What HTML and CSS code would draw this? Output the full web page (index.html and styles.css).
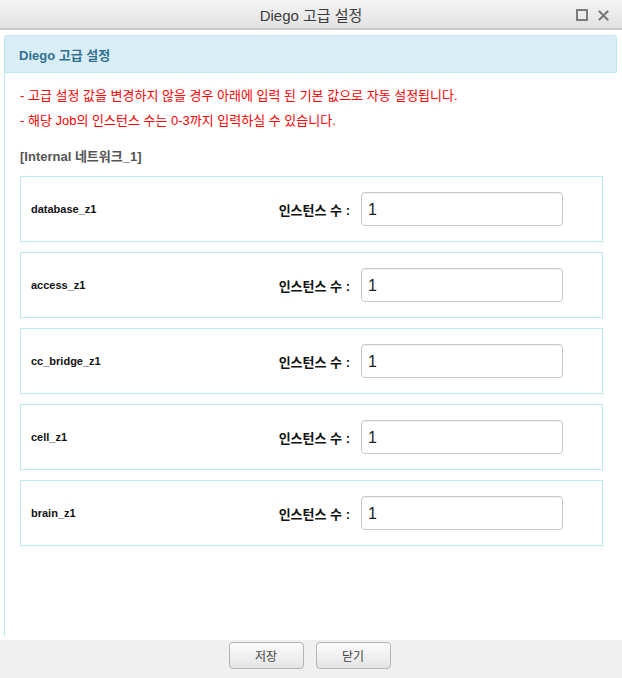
FILE: index.html
```html
<!DOCTYPE html>
<html lang="ko">
<head>
<meta charset="utf-8">
<title>Diego 고급 설정</title>
<link rel="stylesheet" href="styles.css">
</head>
<body>
<div class="dialog">
  <div class="titlebar">
    <span class="title">Diego 고급 설정</span>
    <div class="tools">
      <svg class="ico" width="12" height="12" viewBox="0 0 12 12"><rect x="1" y="1" width="10" height="10" fill="none" stroke="#7b7b7b" stroke-width="2"/></svg>
      <svg class="ico" width="11" height="11" viewBox="0 0 11 11"><path d="M1.5 1.5 L9.5 9.5 M9.5 1.5 L1.5 9.5" stroke="#7b7b7b" stroke-width="2.2" stroke-linecap="round"/></svg>
    </div>
  </div>
  <div class="content">
    <div class="panel">
      <div class="panel-heading">Diego 고급 설정</div>
      <div class="panel-body">
        <p class="warn">- 고급 설정 값을 변경하지 않을 경우 아래에 입력 된 기본 값으로 자동 설정됩니다.</p>
        <p class="warn">- 해당 Job의 인스턴스 수는 0-3까지 입력하실 수 있습니다.</p>
        <h4 class="net">[Internal 네트워크_1]</h4>
        <div class="job">
          <span class="job-name">database_z1</span>
          <label class="job-label">인스턴스 수 :</label>
          <input class="job-input" type="text" value="1">
        </div>
        <div class="job">
          <span class="job-name">access_z1</span>
          <label class="job-label">인스턴스 수 :</label>
          <input class="job-input" type="text" value="1">
        </div>
        <div class="job">
          <span class="job-name">cc_bridge_z1</span>
          <label class="job-label">인스턴스 수 :</label>
          <input class="job-input" type="text" value="1">
        </div>
        <div class="job">
          <span class="job-name">cell_z1</span>
          <label class="job-label">인스턴스 수 :</label>
          <input class="job-input" type="text" value="1">
        </div>
        <div class="job">
          <span class="job-name">brain_z1</span>
          <label class="job-label">인스턴스 수 :</label>
          <input class="job-input" type="text" value="1">
        </div>
      </div>
    </div>
  </div>
  <div class="footer">
    <button class="btn" type="button">저장</button>
    <button class="btn" type="button">닫기</button>
  </div>
</div>
</body>
</html>
```

FILE: styles.css
```css
* { box-sizing: border-box; }
html, body {
  margin: 0;
  padding: 0;
  background: #fff;
  font-family: "Liberation Sans", Arial, "Noto Sans CJK KR", sans-serif;
}
.dialog {
  width: 622px;
  height: 678px;
  display: flex;
  flex-direction: column;
  overflow: hidden;
}
.titlebar {
  height: 30px;
  flex: none;
  background: linear-gradient(#f4f4f4, #e2e2e2);
  border-bottom: 2px solid #c8c8c8;
  position: relative;
  display: flex;
  align-items: center;
  justify-content: center;
}
.title {
  font-size: 15px;
  color: #3c3c3c;
  padding-top: 1px;
}
.tools {
  position: absolute;
  right: 13px;
  top: 9px;
  display: flex;
  gap: 10px;
  align-items: center;
}
.ico { display: block; }
.content {
  flex: 1;
  padding: 5px 5px 4px 4px;
  overflow: hidden;
}
.panel {
  height: 100%;
  display: flex;
  flex-direction: column;
}
.panel-heading {
  height: 38px;
  flex: none;
  background: #d9edf7;
  border: 1px solid #bce8f1;
  border-radius: 3px 3px 0 0;
  color: #31708f;
  font-weight: bold;
  font-size: 13px;
  padding: 0 14px;
  display: flex;
  align-items: center;
}
.panel-body {
  flex: 1;
  border-left: 1px solid #bce8f1;
  padding: 10px 14px 0 15px;
}
.warn {
  margin: 0;
  color: #ff0000;
  font-size: 13px;
  line-height: 25px;
}
.net {
  margin: 11px 0 7px;
  font-size: 13px;
  line-height: 25px;
  color: #555;
  font-weight: bold;
}
.job {
  width: 583px;
  height: 66px;
  border: 1px solid #bce8f1;
  margin-bottom: 10px;
  display: flex;
  align-items: center;
  padding: 0 39px 0 10px;
}
.job-name {
  flex: 1;
  font-size: 11px;
  font-weight: bold;
  color: #111;
}
.job-label {
  font-size: 13px;
  font-weight: bold;
  color: #111;
  margin-right: 11px;
}
.job-input {
  width: 202px;
  height: 34px;
  border: 1px solid #c8c8c8;
  border-radius: 4px;
  padding: 2px 6px 0;
  font-size: 16px;
  font-family: "Liberation Sans", Arial, sans-serif;
  color: #222;
  box-shadow: inset 0 1px 1px rgba(0,0,0,0.06);
}
.footer {
  height: 38px;
  flex: none;
  background: #f0f0f0;
  display: flex;
  justify-content: center;
  align-items: flex-start;
  gap: 12px;
  padding: 2px 3px 0 0;
}
.btn {
  width: 75px;
  height: 27px;
  border: 1px solid #b4b4b4;
  border-radius: 4px;
  background: linear-gradient(#fcfcfc, #e4e4e4);
  font-family: "Noto Sans CJK KR", sans-serif;
  font-size: 12px;
  color: #444;
  padding: 0;
}
```
